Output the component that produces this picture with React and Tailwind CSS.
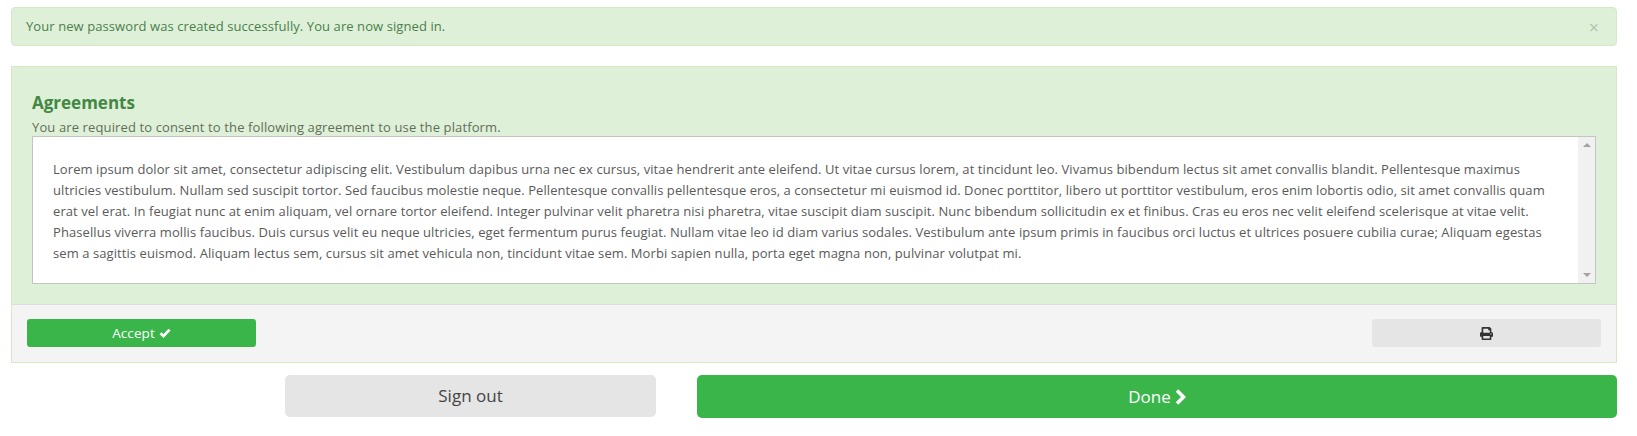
import React from 'react';
import { FaPrint } from 'react-icons/fa';

const LINES = [
    'Lorem ipsum dolor sit amet, consectetur adipiscing elit. Vestibulum dapibus urna nec ex cursus, vitae hendrerit ante eleifend. Ut vitae cursus lorem, at tincidunt leo. Vivamus bibendum lectus sit amet convallis blandit. Pellentesque maximus',
    'ultricies vestibulum. Nullam sed suscipit tortor. Sed faucibus molestie neque. Pellentesque convallis pellentesque eros, a consectetur mi euismod id. Donec porttitor, libero ut porttitor vestibulum, eros enim lobortis odio, sit amet convallis quam',
    'erat vel erat. In feugiat nunc at enim aliquam, vel ornare tortor eleifend. Integer pulvinar velit pharetra nisi pharetra, vitae suscipit diam suscipit. Nunc bibendum sollicitudin ex et finibus. Cras eu eros nec velit eleifend scelerisque at vitae velit.',
    'Phasellus viverra mollis faucibus. Duis cursus velit eu neque ultricies, eget fermentum purus feugiat. Nullam vitae leo id diam varius sodales. Vestibulum ante ipsum primis in faucibus orci luctus et ultrices posuere cubilia curae; Aliquam egestas',
    'sem a sagittis euismod. Aliquam lectus sem, cursus sit amet vehicula non, tincidunt vitae sem. Morbi sapien nulla, porta eget magna non, pulvinar volutpat mi.',
];

const CheckIcon = () => (
    <svg width="12" height="10" viewBox="0 0 12 10" fill="none">
        <path d="M1.5 5.2 4.5 8 10.6 1.6" stroke="currentColor" strokeWidth="2.8" />
    </svg>
);

const ChevronIcon = () => (
    <svg width="11" height="16" viewBox="0 0 11 16" fill="none">
        <path d="M2 1.5 8.5 8 2 14.5" stroke="currentColor" strokeWidth="3.6" />
    </svg>
);

const App = () => {
    return (
        <div className="h-[436px] bg-white pl-[11px] pt-[7px] pr-[20px] font-['Open_Sans',sans-serif] text-[13px] tracking-[0.08px]">
            {/* Success alert */}
            <div className="flex h-[39px] items-center justify-between rounded border border-[#d6e9c6] bg-[#dff0d8] pl-[14px] pr-[17px] text-[#4a7f4b]">
                <span>Your new password was created successfully. You are now signed in.</span>
                <span className="text-[18px] leading-none text-[#b3c4ad]">×</span>
            </div>

            {/* Agreement panel */}
            <div className="mt-[20px] border border-[#d6e9c6]">
                <div className="bg-[#dff0d8] px-[20px] pt-[26px] pb-[20px]">
                    <h3 className="text-[17px] leading-[20px] font-bold tracking-normal text-[#428743]">Agreements</h3>
                    <p className="mt-[5px] leading-[18px] tracking-[0.12px] text-[#5f6f58]">You are required to consent to the following agreement to use the platform.</p>
                    <div className="flex h-[148px] border border-[#c4c4c4] bg-white">
                        <div className="flex-1 pl-[20px] pt-[22px] leading-[21px] whitespace-nowrap text-[#5a5a5a]">
                            {LINES.map((line) => (
                                <div key={line.slice(0, 12)}>{line}</div>
                            ))}
                        </div>
                        {/* Scrollbar */}
                        <div className="flex w-[17px] flex-col items-center justify-between bg-[#f1f1f1] py-[6px]">
                            <div className="h-0 w-0 border-x-[4px] border-b-[4px] border-x-transparent border-b-[#a3a3a3]" />
                            <div className="h-0 w-0 border-x-[4px] border-t-[4px] border-x-transparent border-t-[#a3a3a3]" />
                        </div>
                    </div>
                </div>
                <div className="flex items-center justify-between border-t border-[#ddd] bg-[#f4f4f4] px-[15px] pt-[14px] pb-[15px]">
                    <button className="flex h-[28px] w-[229px] items-center justify-center gap-[4px] rounded-[3px] bg-[#39b54a] text-[13.5px] text-white">
                        Accept <CheckIcon />
                    </button>
                    <button className="flex h-[28px] w-[229px] items-center justify-center rounded-[3px] bg-[#e5e5e5] text-[#333]">
                        <FaPrint className="text-[13px]" />
                    </button>
                </div>
            </div>

            {/* Bottom actions */}
            <div className="mt-[12px] flex items-start justify-end gap-[41px]">
                <button className="h-[42px] w-[371px] rounded-[5px] bg-[#e5e5e5] text-[17px] tracking-normal text-[#444]">Sign out</button>
                <button className="flex h-[43px] w-[920px] items-center justify-center gap-[4px] rounded-[5px] bg-[#39b54a] text-[17px] tracking-normal text-white">
                    Done <ChevronIcon />
                </button>
            </div>
        </div>
    );
};

export default App;
